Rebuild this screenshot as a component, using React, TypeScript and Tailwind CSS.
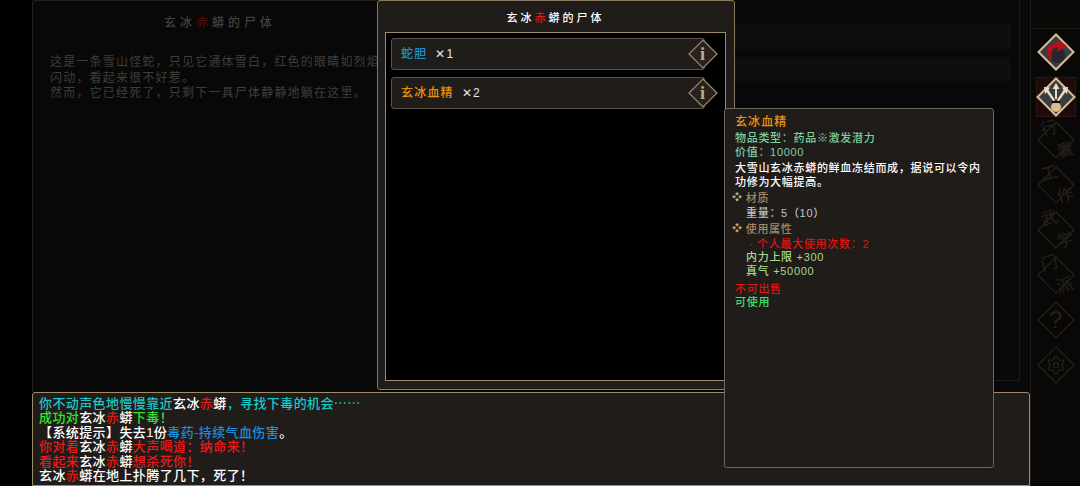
import { Settings } from 'lucide-react';

const cjk = "font-['Liberation_Sans','Noto_Sans_CJK_SC',sans-serif]";

function Red({ children }: { children: string }) {
  return <span className="text-[#d81a12]">{children}</span>;
}

function Snake() {
  return (
    <span className="text-white">
      玄冰<Red>赤</Red>蟒
    </span>
  );
}

function InfoDiamond() {
  return (
    <svg width="30" height="30" viewBox="0 0 30 30" className="shrink-0">
      <path d="M15 1 L29 15 L15 29 L1 15 Z" fill="#26221f" stroke="#a08a68" strokeWidth="1.2" />
      <text x="15" y="21" textAnchor="middle" fontFamily="Liberation Serif" fontWeight="700" fontSize="18" fill="#c4ab84">
        i
      </text>
    </svg>
  );
}

function LootRow({ name, color, count }: { name: string; color: string; count: string }) {
  return (
    <div className="relative flex h-[32px] w-[314px] items-center rounded-[3px] border border-[#5b5346] bg-[#1f1c1a] pl-[9px] text-[12px] font-medium tracking-[1.2px]">
      <span className={color}>{name}</span>
      <span className="ml-[8px] text-[12px] text-[#e8e8e8]">✕{count}</span>
      <div className="absolute right-[-14px] top-0">
        <InfoDiamond />
      </div>
    </div>
  );
}

function NavDiamond({ label, sub, children }: { label?: string; sub?: string; children?: React.ReactNode }) {
  return (
    <div className="relative flex h-[44px] w-[38px] items-center justify-center text-[#25221c]">
      <svg width="38" height="38" viewBox="0 0 38 38" className="absolute left-0 top-[3px]">
        <path d="M19 1 L37 19 L19 37 L1 19 Z" fill="none" stroke="#26231d" strokeWidth="1.2" />
      </svg>
      {label && <span className="absolute left-[4px] top-[1px] rotate-[-15deg] text-[17px] leading-[20px]">{label}</span>}
      {sub && <span className="absolute bottom-[1px] right-[1px] rotate-[-15deg] text-[17px] leading-[20px]">{sub}</span>}
      {children}
    </div>
  );
}

function Sidebar() {
  return (
    <div className="flex w-[50px] shrink-0 flex-col items-center border-l border-[#1d1a15] bg-[#090807]">
      <div className="h-[29px] w-full border-b border-[#1d1a15]" />
      <div className="mt-[3px] flex h-[40px] items-center justify-center">
        <svg width="38" height="38" viewBox="0 0 38 38">
          <path d="M19 1.5 L36.5 19 L19 36.5 L1.5 19 Z" fill="#3a3a40" stroke="#d8bd92" strokeWidth="2" />
          <circle cx="20" cy="22" r="8" fill="#26262b" />
          <path d="M13 26 C7 17 12 9 21 10 L20 6 L30 13 L20 19 L21 15 C16 14 13 19 15 27 Z" fill="#b5101a" />
        </svg>
      </div>
      <div className="mt-[5px] flex h-[40px] w-[40px] items-center justify-center border border-[#2e1614] bg-[#1c0b0a]">
        <svg width="40" height="40" viewBox="0 0 40 40" className="shrink-0">
          <path d="M20 1.5 L38.5 20 L20 38.5 L1.5 20 Z" fill="#3a3a40" stroke="#d8bd92" strokeWidth="2" />
          <path d="M20 6 L16.5 12 H19 V22 H21 V12 H23.5 Z M8 10 L14 10.5 L12.5 13 L19 23 L17.5 24.5 L10.5 15 L9 17.5 Z M32 10 L26 10.5 L27.5 13 L21 23 L22.5 24.5 L29.5 15 L31 17.5 Z" fill="#ecdcc0" />
          <circle cx="20" cy="30" r="5" fill="#d8bd92" />
          <rect x="16" y="24" width="8" height="2" fill="#0c0c0c" />
        </svg>
      </div>
      <div className="mt-[1px] flex flex-col items-center gap-[1px]">
        <NavDiamond label="行" sub="囊" />
        <NavDiamond label="工" sub="作" />
        <NavDiamond label="武" sub="学" />
        <NavDiamond label="门" sub="派" />
        <NavDiamond>
          <span className="text-[24px]">?</span>
        </NavDiamond>
        <NavDiamond>
          <Settings size={20} strokeWidth={1.5} />
        </NavDiamond>
      </div>
    </div>
  );
}

function Tooltip() {
  return (
    <div className="absolute left-[724px] top-[108px] flex h-[360px] w-[270px] flex-col rounded-[3px] border border-[#6e675c] bg-[#1f1c1a] pl-[10px] pt-[5px] text-[11px] font-medium leading-[14px] tracking-[0.7px]">
      <div className="text-[12px] leading-[16px] tracking-[1.1px] text-[#e8930c]">玄冰血精</div>
      <div className="mt-[1px] text-[#7fcf9f]">物品类型：药品※激发潜力</div>
      <div className="text-[#7fcf9f]">价值：10000</div>
      <div className="mt-[2px] w-[250px] text-white">大雪山玄冰赤蟒的鲜血冻结而成，据说可以令内功修为大幅提高。</div>
      <div className="mt-[2px] -ml-[3px] flex items-center gap-[3px] text-[#a08a68]">
        <span className="text-[10px] text-[#c6a46c]">❖</span>材质
      </div>
      <div className="mt-[1px] pl-[11px] text-[#c4c4c4]">重量：5（10）</div>
      <div className="mt-[2px] -ml-[3px] flex items-center gap-[3px] text-[#a08a68]">
        <span className="text-[10px] text-[#c6a46c]">❖</span>使用属性
      </div>
      <div className="mt-[1px] pl-[14px] text-[#e01410]">· 个人最大使用次数：2</div>
      <div className="-mt-[1px] pl-[11px] text-[#a8d88a]">内力上限 +300</div>
      <div className="pl-[11px] text-[#a8d88a]">真气 +50000</div>
      <div className="mt-[4px] text-[#e01410]">不可出售</div>
      <div className="-mt-[1px] text-[#3fe06a]">可使用</div>
    </div>
  );
}

export default function App() {
  return (
    <div lang="zh-CN" className={`relative flex h-[486px] w-[1080px] overflow-hidden bg-black ${cjk}`}>
      <div className="w-[32px] shrink-0" />

      <div className="flex min-w-0 flex-1 flex-col">
        {/* Corpse description, dimmed behind the loot window */}
        <div className="flex h-[392px] shrink-0">
          <div className="w-[345px] shrink-0 rounded-tl-[3px] border-l border-t border-[#241f19] bg-[#080808] pl-[17px]">
            <div className="mt-[14px] w-[340px] text-center text-[12px] font-medium leading-[16px] tracking-[4px] text-[#43403c]">
              玄冰<span className="text-[#520a07]">赤</span>蟒的尸体
            </div>
            <div className="mt-[24px] w-[360px] text-[12px] leading-[15.5px] tracking-[1.2px] text-[#403e3a]">
              <div className="whitespace-nowrap">这是一条雪山怪蛇，只见它通体雪白，红色的眼睛如烈焰</div>
              <div>闪动，看起来很不好惹。</div>
              <div>然而，它已经死了，只剩下一具尸体静静地躺在这里。</div>
            </div>
          </div>
          <div className="flex-1 bg-[#080808] pl-[358px]">
            <div className="flex h-[381px] w-[285px] flex-col border-b border-r border-[#1d1a15]">
              <div className="mt-[24px] h-[25px] w-[276px] bg-[#0f0e0d]" />
              <div className="mt-[8px] h-[24px] w-[276px] bg-[#0f0e0d]" />
            </div>
          </div>
        </div>

        {/* Message log */}
        <div className="flex-1 rounded-t-[3px] border border-[#a08a68] bg-[#1f1c1a] pl-[6px] pt-[3px] text-[13px] font-medium leading-[14.4px] tracking-[0.4px]">
          <div className="text-[#19c8c8]">
            你不动声色地慢慢靠近<Snake />，寻找下毒的机会<span className="font-['Noto_Sans_CJK_SC',sans-serif]">……</span>
          </div>
          <div className="text-[#2ee62e]">
            成功对<Snake />下毒！
          </div>
          <div className="text-white">
            【系统提示】失去1份<span className="text-[#1c8ed8]">毒药-持续气血伤害</span>。
          </div>
          <div className="text-[#e81a1a]">
            你对着<Snake />大声喝道：纳命来！
          </div>
          <div className="text-[#e81a1a]">
            看起来<Snake />想杀死你！
          </div>
          <div className="text-white">
            <Snake />在地上扑腾了几下，死了！
          </div>
        </div>
      </div>

      <Sidebar />

      {/* Loot window */}
      <div className="absolute left-[377px] top-0 flex h-[390px] w-[358px] flex-col rounded-[3px] border border-[#8c7a5e] bg-[#1f1c1a] pb-[8px] pl-[7px] pr-[8px]">
        <div className="h-[31px] pt-[9px] text-center text-[11px] font-medium leading-[16px] tracking-[3px] text-white">
          玄冰<Red>赤</Red>蟒的尸体
        </div>
        <div className="flex flex-1 flex-col gap-[7px] border border-[#a08a68] bg-black py-[5px] pl-[5px] pr-[8px]">
          <LootRow name="蛇胆" color="text-[#1c94d8]" count="1" />
          <LootRow name="玄冰血精" color="text-[#e8930c]" count="2" />
        </div>
      </div>

      <Tooltip />
    </div>
  );
}
